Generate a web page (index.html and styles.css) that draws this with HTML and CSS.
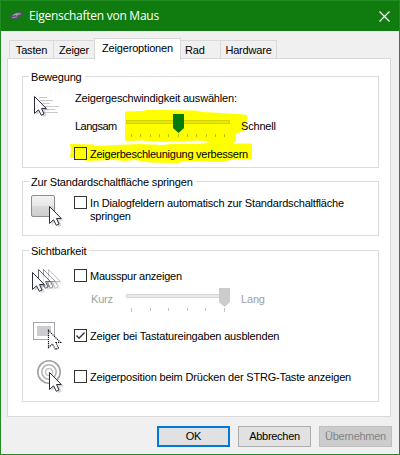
FILE: index.html
```html
<!DOCTYPE html>
<html lang="de">
<head>
<meta charset="utf-8">
<title>Eigenschaften von Maus</title>
<link rel="stylesheet" href="styles.css">
</head>
<body>
<svg width="0" height="0" class="defs">
  <defs>
    <g id="cursor">
      <path d="M2.5 2 V19 L6.5 15.5 L9.5 21 L12.5 19.5 L10.5 14.5 H15 Z" fill="#777" opacity=".3"/>
      <path d="M.5 .5 V17.5 L4.5 13.8 L7.3 19.3 L10 18 L7.5 12.5 H12.3 Z" fill="#fff" stroke="#2b2b40"/>
    </g>
  </defs>
</svg>
<div class="window">
  <header class="titlebar">
    <svg class="mouse" width="16" height="10" viewBox="0 0 16 10"><path d="M1 5.5 Q4 1 11 1 Q15 1 14 3.5 Q11 8 5 8.5 Q0 8.5 1 5.5Z" fill="#4d5260"/><path d="M3 4.7 Q6 1.5 11 1.7 L8 4 Q5 4.5 3 4.7Z" fill="#9ba3ae"/><path d="M7 4.5 L12 2.5 M3 6.5 L8 6" stroke="#aab0b8" stroke-width=".8"/></svg>
    <h1>Eigenschaften von Maus</h1>
    <svg class="close" width="11" height="11" viewBox="0 0 11 11"><path d="M.5 .5 L10.5 10.5 M10.5 .5 L.5 10.5" stroke="#fff" stroke-width="1.2"/></svg>
  </header>
  <nav class="tabs">
    <span class="tab t1">Tasten</span><span class="tab t2">Zeiger</span><span class="tab active">Zeigeroptionen</span><span class="tab t4">Rad</span><span class="tab t5">Hardware</span>
  </nav>
  <main class="panel">
    <section class="group motion">
      <h2>Bewegung</h2>
      <svg class="highlight" width="190" height="60" viewBox="0 0 190 60"><path fill="#ff0" d="M60 5.5 L78 5 L82 3.7 L130 4.5 L138 6 L174 8 L182 9 V14 L180 24 L171 28 V35 L168 37.5 H187 V53 L165 54 L158 56 L120 55 L113 57 L84 56.5 L70 54 L60 55 L48 54 L21 55 V53 L5 51.5 L6 43 L5 38 L29 38.5 V40 L75 38 L98 39 L105 38 L135 38 L145 36 L133 34.5 L98 36 L78 34.5 L60 35Z"/></svg>
      <svg class="icon" width="32" height="26" viewBox="0 0 32 26"><path d="M8 3.5H16 M9 6.5H22 M10 9.5H19 M12 12.5H28 M13 15.5H24 M13 18.5H27" stroke="#c9c9cd"/><use href="#cursor" x="3" y="2"/></svg>
      <div class="fields">
        <div class="label caption">Zeigergeschwindigkeit auswählen:</div>
        <div class="slide">
          <span class="from">Langsam</span>
          <svg width="106" height="25" viewBox="0 0 106 25"><rect x="1.5" y="7.5" width="103" height="3" fill="#e7e700" stroke="#d2d200"/><path d="M6.5 21v3M15.5 21v3M25.5 21v3M34.5 21v3M43.5 21v3M53.5 21v3M62.5 21v3M71.5 21v3M81.5 21v3M90.5 21v3M99.5 21v3" stroke="#c1c100"/><path d="M48 1H59V15L53.5 20L48 15Z" fill="#007a0a"/></svg>
          <span class="to">Schnell</span>
        </div>
        <label class="check accel tight"><i class="box marked"></i><span>Zeigerbeschleunigung verbessern</span></label>
      </div>
    </section>
    <section class="group jump">
      <h2>Zur Standardschaltfläche springen</h2>
      <svg class="icon" width="32" height="32" viewBox="0 0 32 32"><defs><linearGradient id="face" x2="0" y2="1"><stop offset="0" stop-color="#f4f4f4"/><stop offset=".48" stop-color="#e7e7e7"/><stop offset=".52" stop-color="#d9d9d9"/><stop offset="1" stop-color="#cecece"/></linearGradient></defs><rect x=".5" y=".5" width="23" height="21" rx="1.5" fill="url(#face)" stroke="#8d8d8d"/><use href="#cursor" x="18" y="11" /></svg>
      <div class="fields">
        <label class="check"><i class="box"></i><span>In Dialogfeldern automatisch zur Standardschaltfläche<br>springen</span></label>
      </div>
    </section>
    <section class="group sight">
      <h2>Sichtbarkeit</h2>
      <div class="row trail">
        <svg class="icon" width="33" height="28" viewBox="0 0 33 28"><use href="#cursor" x="17" y="1" opacity=".3"/><use href="#cursor" x="12" y="1" opacity=".5"/><use href="#cursor" x="7" y="1" opacity=".75"/><use href="#cursor" x="1" y="4"/></svg>
        <div class="fields">
          <label class="check tight"><i class="box"></i><span>Mausspur anzeigen</span></label>
          <div class="slide disabled">
            <span class="from">Kurz</span>
            <svg width="106" height="25" viewBox="0 0 106 25"><rect x="1.5" y="7.5" width="103" height="3" fill="#e7eaea" stroke="#d6d6d6"/><path d="M6.5 21v4M25.5 21v3M43.5 21v3M62.5 21v3M80.5 21v3M99.5 21v4" stroke="#c4c4c4"/><path d="M94 1H105V15L99.5 20L94 15Z" fill="#ccc"/></svg>
            <span class="to">Lang</span>
          </div>
        </div>
      </div>
      <div class="row hide">
        <svg class="icon" width="33" height="30" viewBox="0 0 33 30"><rect x="2.5" y=".5" width="21" height="17" fill="#fff" stroke="#a4a4aa"/><rect x="6" y="4" width="14" height="10" fill="#cdcdd1"/><path d="M17.5 8.5V25.5L21.5 22L24.5 27.5L27.5 26L25 20.5H29.5Z" fill="#fff" stroke="#10101c" stroke-width="1.2" stroke-dasharray="1.2 .9"/></svg>
        <label class="check"><i class="box"><svg width="11" height="11" viewBox="0 0 11 11"><path d="M1.5 5.5L4 8.2L9.5 2.5" fill="none" stroke="#333" stroke-width="1.3"/></svg></i><span>Zeiger bei Tastatureingaben ausblenden</span></label>
      </div>
      <div class="row locate">
        <svg class="icon" width="33" height="34" viewBox="0 0 33 34"><g fill="none" stroke-width="1.6"><circle cx="18" cy="12" r="11.2" stroke="#a2a2a6"/><circle cx="18" cy="12" r="7.2" stroke="#b5b5b9"/><circle cx="18" cy="12" r="3.5" stroke="#c5c5c8"/></g><use href="#cursor" x="18" y="12"/></svg>
        <label class="check"><i class="box"></i><span>Zeigerposition beim Drücken der STRG-Taste anzeigen</span></label>
      </div>
    </section>
  </main>
  <footer class="actions"><button class="ok">OK</button><button>Abbrechen</button><button disabled>Übernehmen</button></footer>
</div>
</body>
</html>
```
FILE: styles.css
```css
* { box-sizing: border-box; }
body { margin: 0; font: 11px/13px "Liberation Sans", Arial, sans-serif; letter-spacing: -0.18px; color: #000; }
svg { display: block; flex: none; }
.defs { position: absolute; }
.window { width: 400px; height: 455px; display: flex; flex-direction: column; background: #f0f0f0; border: 1px solid #228b22; }
.titlebar { height: 30px; display: flex; align-items: center; background: #107c10; color: #fff; padding: 0 9px; flex: none; }
.titlebar h1 { margin: 0 auto 0 4px; font: 12px/16px "Open Sans", "Noto Sans", sans-serif; letter-spacing: -0.26px; }
.mouse { margin-left: -1px; }
.tabs { display: flex; align-items: flex-end; height: 28px; padding-left: 8px; flex: none; position: relative; z-index: 1; }
.tab { height: 19px; padding-top: 3px; border: 1px solid #d9d9d9; border-bottom: 0; margin-right: -1px; text-align: center; white-space: nowrap; }
.t1 { width: 45px; }
.t2 { width: 42px; }
.active { width: 87px; height: 22px; background: #fff; margin-bottom: -1px; padding-top: 3px; }
.t4 { width: 41px; text-align: left; padding-left: 4px; }
.t5 { width: 57px; margin: 0; }
.panel { margin-left: 6px; width: 384px; height: 359px; flex: none; background: #fff; border: 1px solid #d9d9d9; padding: 17px 11px 0 14px; display: flex; flex-direction: column; margin-top: -1px; }
.group { position: relative; border: 1px solid #dcdcdc; width: 357px; flex: none; display: flex; }
.group h2 { position: absolute; left: 6px; top: -6px; margin: 0; padding: 0 3px 0 2px; background: #fff; font: inherit; white-space: nowrap; }
.motion { height: 92px; }
.jump { height: 55px; margin-top: 13px; }
.sight { height: 152px; margin-top: 14px; flex-direction: column; }
.highlight { position: absolute; left: 42px; top: 29px; }
.motion .icon { margin: 17px 11px 0 8px; }
.fields { position: relative; }
.caption { margin: 15px 0 0 1px; }
.slide { display: flex; height: 25px; margin-top: 8px; padding-left: 1px; }
.slide span { margin-top: 7px; }
.from { width: 50px; letter-spacing: -0.5px; }
.to { margin-left: 10px; }
.check { display: flex; white-space: nowrap; }
.check span { margin: 1px 0 0 3px; }
.tight { letter-spacing: -0.25px; }
.box { width: 13px; height: 13px; border: 1px solid #333; background: #fff; flex: none; }
.box.marked { background: #ff0; }
.accel { margin-top: 9px; }
.jump .icon { margin: 13px 11px 0 8px; }
.jump .fields { margin-top: 14px; }
.row { display: flex; }
.row .icon { margin: 0 10px 0 8px; }
.trail { margin-top: 17px; height: 71px; }
.trail .fields { margin-top: 1px; }
.trail .slide { margin-top: 4px; }
.disabled { color: #a0a0a0; }
.disabled .from { padding-left: 16px; letter-spacing: -0.18px; }
.disabled span { margin-top: 6px; }
.hide { margin-top: -17px; height: 39px; }
.hide .check { margin-top: 7px; }
.locate .icon { margin-top: -1px; }
.locate .check { margin-top: 9px; }
.actions { display: flex; gap: 8px; margin: 9px 7px 0 156px; }
button { width: 73px; height: 21px; padding: 0; border: 1px solid #adadad; background: #e1e1e1; font: inherit; letter-spacing: -0.28px; color: #000; }
.ok { border: 2px solid #0078d7; }
button:disabled { background: #ccc; border-color: #bfbfbf; color: #838383; }
```
